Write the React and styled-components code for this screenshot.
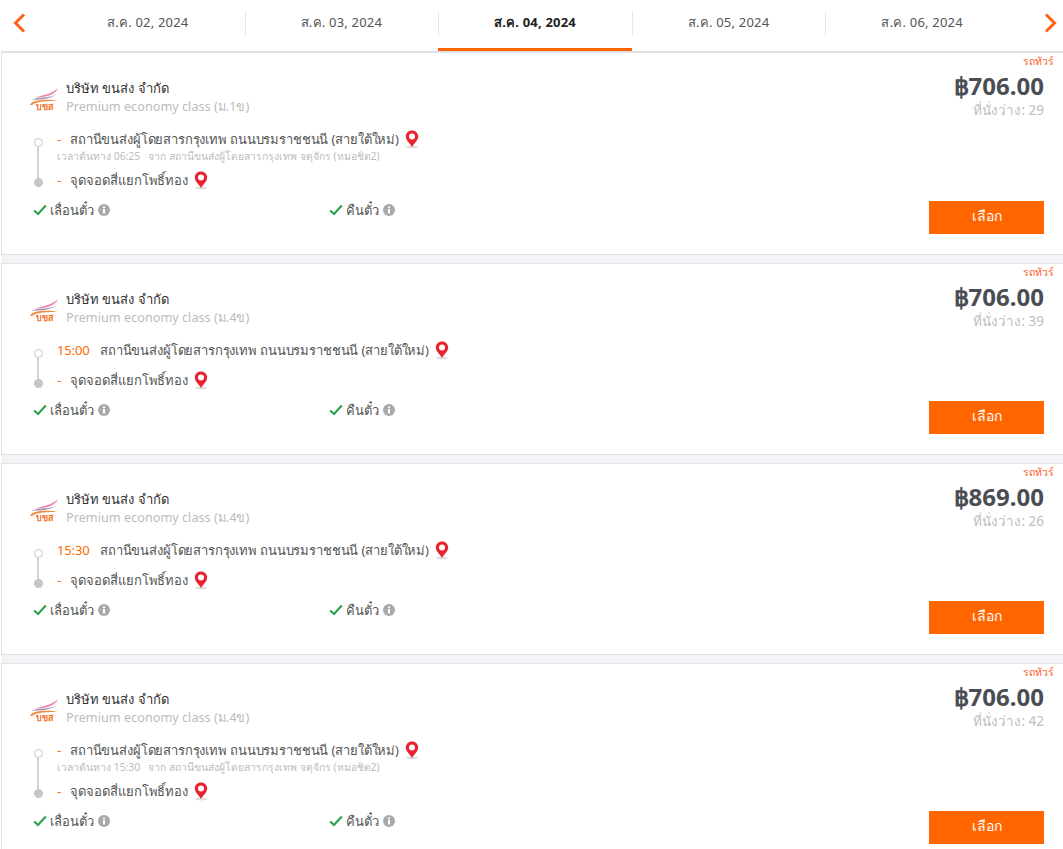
import React from 'react';
import styled, { createGlobalStyle } from 'styled-components';

const GlobalStyle = createGlobalStyle`
    html, body {
        margin: 0;
        padding: 0;
        background: #fff;
        font-family: "Noto Sans", "Open Sans", sans-serif;
        overflow: hidden;
    }
`;

const Page = styled.main`
    width: 1063px;
    height: 849px;
    padding-left: 1px;
    box-sizing: border-box;
    overflow: hidden;
    background: #fff;
`;

const DateBar = styled.div`
    display: flex;
    align-items: stretch;
    height: 51px;
    background: #fff;
    border-bottom: 2px solid #e0e0e6;
`;

const Arrow = styled.div`
    flex: none;
    display: flex;
    align-items: center;
    box-sizing: border-box;
    width: ${props => (props.$right ? '44px' : '50px')};
    justify-content: ${props => (props.$right ? 'flex-end' : 'flex-start')};
    padding: ${props => (props.$right ? '0 6px 6px 0' : '0 0 6px 12px')};
`;

const DateTabs = styled.div`
    flex: 1;
    display: flex;
`;

const DateTab = styled.div`
    flex: 1;
    position: relative;
    display: flex;
    align-items: center;
    justify-content: center;
    padding-bottom: 3px;
    box-sizing: border-box;
    font-size: 13px;
    letter-spacing: 0.2px;
    font-weight: ${props => (props.$active ? 700 : 400)};
    color: ${props => (props.$active ? '#222' : '#555')};
    border-bottom: 3px solid ${props => (props.$active ? '#ff6600' : 'transparent')};

    &:not(:first-child)::before {
        content: '';
        position: absolute;
        left: 0;
        top: 11px;
        height: 25px;
        width: 1px;
        background: #e8e8ee;
    }
`;

const CardList = styled.div`
    display: flex;
    flex-direction: column;
    gap: 8px;
    background: #f4f4f6;
    margin-right: -1px;
`;

const Card = styled.section`
    display: flex;
    justify-content: space-between;
    flex: none;
    height: ${props => (props.$tall ? '202px' : '192px')};
    box-sizing: border-box;
    background: #fff;
    border: 1px solid #e2e2e8;
    border-top-width: ${props => (props.$first ? 0 : '1px')};
`;

const Info = styled.div`
    padding: 26px 0 0 27px;
`;

const Operator = styled.div`
    display: flex;
    align-items: center;
    gap: 7px;
    height: 37px;
`;

const OperatorText = styled.div`
    display: flex;
    flex-direction: column;
`;

const OperatorName = styled.div`
    font-size: 13px;
    line-height: 18px;
    font-weight: 500;
    color: #333;
`;

const ClassName = styled.div`
    font-size: 12.7px;
    line-height: 19px;
    color: #bcbcbc;
`;

const Route = styled.div`
    display: flex;
    gap: 14px;
    margin: 14px 0 0 4px;
`;

const Rail = styled.div`
    display: flex;
    flex-direction: column;
    align-items: center;
    width: 10px;
    padding: 8px 0 0;
    height: ${props => (props.$tall ? '49px' : '39px')};
`;

const HollowDot = styled.span`
    width: 9px;
    height: 9px;
    flex: none;
    box-sizing: border-box;
    border: 1px solid #c6c6c6;
    border-radius: 50%;
`;

const RailLine = styled.span`
    flex: 1;
    width: 2px;
    background: #d2d2d2;
`;

const SolidDot = styled.span`
    width: 9px;
    height: 9px;
    flex: none;
    border-radius: 50%;
    background: #c6c6c6;
`;

const Stops = styled.div`
    display: flex;
    flex-direction: column;
`;

const Stop = styled.div`
    display: flex;
    align-items: center;
    height: 22px;
    margin-top: -2px;
    font-size: 13px;
    letter-spacing: -0.15px;
    color: #555;
`;

const NextStop = styled(Stop)`
    height: 30px;
    margin-top: ${props => (props.$afterNote ? '2px' : '4px')};
    letter-spacing: -0.05px;
`;

const Time = styled.span`
    color: #ff6600;
    margin-right: 7px;
    min-width: ${props => (props.$clock ? '36px' : '6px')};
`;

const Note = styled.div`
    font-size: 10.4px;
    line-height: 13px;
    color: #bdbdbd;
    white-space: pre;
`;

const Pin = styled.svg`
    margin-left: 6px;
    flex: none;
`;

const Perks = styled.div`
    display: flex;
    margin: 5px 0 0 4px;
`;

const Perk = styled.div`
    width: 296px;
    display: flex;
    align-items: center;
    gap: 3px;
    font-size: 13px;
    line-height: 20px;
    color: #555;
`;

const Aside = styled.div`
    display: flex;
    flex-direction: column;
    align-items: flex-end;
    padding: 1px 9px 20px 0;
`;

const Tag = styled.div`
    font-size: 10.5px;
    line-height: 14px;
    color: #ff5a1f;
`;

const Price = styled.div`
    margin: 2px 10px 0 0;
    font-size: 24px;
    line-height: 32px;
    font-weight: 700;
    color: #4a4e54;
`;

const Seats = styled.div`
    margin-right: 10px;
    font-size: 13.5px;
    line-height: 17px;
    color: #bdbdbd;
`;

const SelectButton = styled.button`
    width: 115px;
    height: 33px;
    margin: auto 10px 0 0;
    padding: 0 0 3px;
    border: 0;
    border-radius: 0;
    background: #ff6600;
    color: #fff;
    font-family: inherit;
    font-size: 14px;
    cursor: pointer;
`;

const ChevronIcon = ({ right }) => (
    <svg width="13" height="20" viewBox="0 0 13 20" fill="none">
        <polyline
            points={right ? '2,1.5 10.5,10 2,18.5' : '11,1.5 2.5,10 11,18.5'}
            stroke="#ff6414"
            strokeWidth="3"
        />
    </svg>
);

const Logo = () => (
    <svg width="30" height="30" viewBox="0 0 30 30" style={{ flex: 'none', marginTop: 3 }}>
        <path d="M5 14 C12 11 22 11 29 4 C26 12 15 13 5 14Z" fill="#e88aa8" />
        <path d="M3 16 C11 12 20 15 28 10 C20 16 11 15 3 16Z" fill="#9a8fb0" />
        <path d="M1 21 C3 15 20 15 29 17 C20 17 7 17 3 21Z" fill="#f08a3c" />
        <text x="15" y="26" textAnchor="middle" fontSize="9" fontWeight="700" fill="#f0712a" fontFamily="Noto Sans, sans-serif">บขส</text>
    </svg>
);

const PinIcon = () => (
    <Pin width="14" height="19" viewBox="0 0 14 19">
        <ellipse cx="7" cy="17" rx="6" ry="1.5" fill="#dedede" />
        <path d="M7 0.5 C3.4 0.5 0.8 3.2 0.8 6.4 C0.8 10.2 4.8 12.8 7 17 C9.2 12.8 13.2 10.2 13.2 6.4 C13.2 3.2 10.6 0.5 7 0.5Z" fill="#e8222e" />
        <circle cx="7" cy="6.4" r="3" fill="#fff" />
    </Pin>
);

const CheckIcon = () => (
    <svg width="14" height="12" viewBox="0 0 14 12" fill="none">
        <polyline points="1.2,6.5 5,10 12.8,1.5" stroke="#2ba24c" strokeWidth="2.2" />
    </svg>
);

const InfoIcon = () => (
    <svg width="12" height="12" viewBox="0 0 12 12" style={{ marginLeft: 1 }}>
        <circle cx="6" cy="6" r="6" fill="#a9a9a9" />
        <rect x="5" y="5" width="2" height="4.4" fill="#fff" />
        <rect x="5" y="2.5" width="2" height="1.6" fill="#fff" />
    </svg>
);

const dates = ['ส.ค. 02, 2024', 'ส.ค. 03, 2024', 'ส.ค. 04, 2024', 'ส.ค. 05, 2024', 'ส.ค. 06, 2024'];

const trips = [
    { id: 1, cls: 'ม.1ข', price: '706.00', seats: 29, note: 'เวลาต้นทาง 06:25   จาก สถานีขนส่งผู้โดยสารกรุงเทพ จตุจักร (หมอชิต2)' },
    { id: 2, cls: 'ม.4ข', price: '706.00', seats: 39, time: '15:00' },
    { id: 3, cls: 'ม.4ข', price: '869.00', seats: 26, time: '15:30' },
    { id: 4, cls: 'ม.4ข', price: '706.00', seats: 42, note: 'เวลาต้นทาง 15:30   จาก สถานีขนส่งผู้โดยสารกรุงเทพ จตุจักร (หมอชิต2)' },
];

const TripCard = ({ trip, first }) => (
    <Card $tall={!!trip.note} $first={first}>
        <Info>
            <Operator>
                <Logo />
                <OperatorText>
                    <OperatorName>บริษัท ขนส่ง จำกัด</OperatorName>
                    <ClassName>Premium economy class ({trip.cls})</ClassName>
                </OperatorText>
            </Operator>
            <Route>
                <Rail $tall={!!trip.note}>
                    <HollowDot />
                    <RailLine />
                    <SolidDot />
                </Rail>
                <Stops>
                    <Stop>
                        <Time $clock={!!trip.time}>{trip.time || '-'}</Time>
                        สถานีขนส่งผู้โดยสารกรุงเทพ ถนนบรมราชชนนี (สายใต้ใหม่)
                        <PinIcon />
                    </Stop>
                    {trip.note && <Note>{trip.note}</Note>}
                    <NextStop $afterNote={!!trip.note}>
                        <Time>-</Time>
                        จุดจอดสี่แยกโพธิ์ทอง
                        <PinIcon />
                    </NextStop>
                </Stops>
            </Route>
            <Perks>
                <Perk><CheckIcon />เลื่อนตั๋ว <InfoIcon /></Perk>
                <Perk><CheckIcon />คืนตั๋ว <InfoIcon /></Perk>
            </Perks>
        </Info>
        <Aside>
            <Tag>รถทัวร์</Tag>
            <Price>฿{trip.price}</Price>
            <Seats>ที่นั่งว่าง: {trip.seats}</Seats>
            <SelectButton>เลือก</SelectButton>
        </Aside>
    </Card>
);

const App = () => {
    return (
        <Page>
            <GlobalStyle />
            <DateBar>
                <Arrow><ChevronIcon /></Arrow>
                <DateTabs>
                    {dates.map((d, i) => (
                        <DateTab key={d} $active={i === 2}>{d}</DateTab>
                    ))}
                </DateTabs>
                <Arrow $right><ChevronIcon right /></Arrow>
            </DateBar>
            <CardList>
                {trips.map((t, i) => (
                    <TripCard key={t.id} trip={t} first={i === 0} />
                ))}
            </CardList>
        </Page>
    );
};

export default App;
